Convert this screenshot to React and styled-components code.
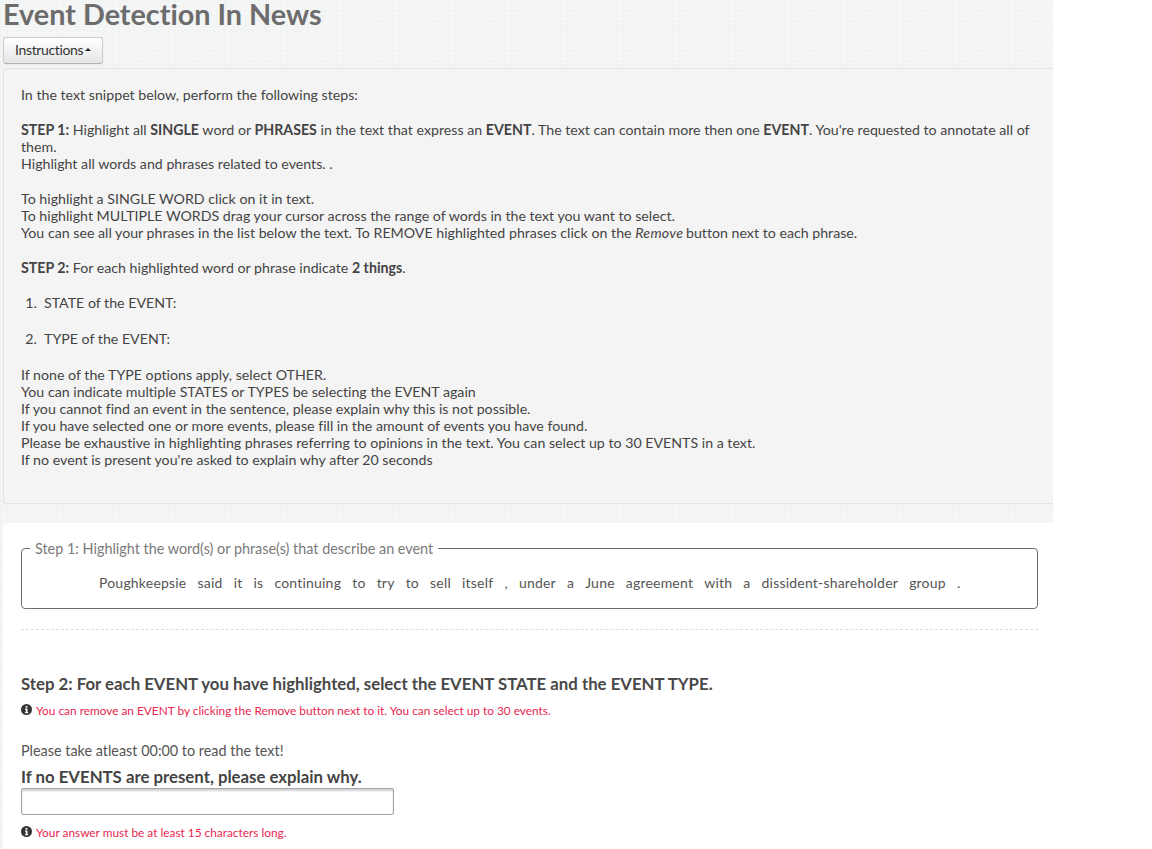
import React from "react";
import styled, { createGlobalStyle } from "styled-components";

const GlobalStyle = createGlobalStyle`
	html, body {
		margin: 0;
		height: 849px;
		overflow: hidden;
		background: #fff;
	}
	body {
		font-family: Lato, "Liberation Sans", sans-serif;
		font-size: 14.2px;
		line-height: 17px;
		font-variant-ligatures: none;
		color: #444;
	}
`;

const Page = styled.div`
	width: 1053px;
	height: 849px;
	overflow: hidden;
	padding-left: 3px;
	box-sizing: border-box;
	background-color: #f3f4f4;
	background-image:
		repeating-linear-gradient(0deg, rgba(255, 255, 255, 0.25) 0 1px, transparent 1px 5px),
		repeating-linear-gradient(90deg, rgba(232, 232, 232, 0.18) 0 1px, transparent 1px 7px);
`;

const Title = styled.h1`
	margin: 0;
	font-size: 28.8px;
	line-height: 28px;
	font-weight: 700;
	color: #6c6c6c;
`;

const ToggleButton = styled.button`
	display: flex;
	align-items: center;
	gap: 2px;
	width: 100px;
	height: 27px;
	margin-top: 9px;
	padding: 0 0 2px 11px;
	font: inherit;
	font-size: 14px;
	letter-spacing: -0.35px;
	color: #333;
	background: linear-gradient(#fff, #e6e6e6);
	border: 1px solid #ccc;
	border-bottom-color: #b3b3b3;
	border-radius: 3px;
	box-shadow: 0 1px 2px rgba(0, 0, 0, 0.05);
`;

const Caret = styled.span`
	width: 0;
	height: 0;
	border-left: 3px solid transparent;
	border-right: 3px solid transparent;
	border-bottom: 3px solid #222;
`;

const Well = styled.div`
	height: 436px;
	margin-top: 4px;
	padding: 17px 17px 0;
	box-sizing: border-box;
	background: #f4f4f4;
	border: 1px solid #e3e3e3;
	border-right: 0;
	border-radius: 4px 0 0 4px;
`;

const Para = styled.p`
	margin: 0 0 18px;
`;

const Steps = styled.ol`
	margin: 0 0 19px;
	padding-left: 23px;
`;

const StepItem = styled.li`
	margin-bottom: 19px;
	&::marker {
		content: counter(list-item) ".\\00a0\\00a0";
	}
	&:last-child {
		margin-bottom: 0;
	}
`;

const RemoveWord = styled.i`
	letter-spacing: 0.3px;
	margin-right: -1px;
`;

const Card = styled.div`
	height: 326px;
	margin-top: 19px;
	padding: 17px 15px 0 18px;
	box-sizing: border-box;
	background: #fff;
	border-radius: 4px 0 0 0;
`;

const SentenceBox = styled.fieldset`
	height: 69px;
	margin: 0;
	padding: 0;
	box-sizing: border-box;
	border: 1px solid #6e6e6e;
	border-radius: 4px;
`;

const BoxLegend = styled.legend`
	padding: 0 5px;
	margin-left: 8px;
	color: #7a7a7a;
	font-size: 14.4px;
	line-height: 17px;
`;

const Sentence = styled.div`
	display: flex;
	gap: 11.1px;
	padding: 17px 0 0 77px;
	color: #555;
	font-size: 14px;
	letter-spacing: 0.2px;
`;

const Divider = styled.hr`
	height: 0;
	margin: 20px 0 0;
	border: 0;
	border-top: 1px dashed #ddd;
`;

const StepHeading = styled.h4`
	margin: 44px 0 0;
	font-size: 16.8px;
	line-height: 20px;
	font-weight: 700;
	color: #484848;
`;

const Hint = styled.div`
	display: flex;
	align-items: center;
	gap: 4px;
	margin-top: ${(p) => p.$top}px;
	font-size: 11.85px;
	line-height: 15px;
	color: #e8264f;
`;

const InfoDot = styled.svg`
	width: 11px;
	height: 11px;
	flex: none;
	margin-top: -3px;
`;

const Notice = styled.div`
	margin-top: 24px;
	font-size: 14.4px;
	color: #555;
`;

const AskHeading = styled.h5`
	margin: 8px 0 0;
	font-size: 16.8px;
	line-height: 19px;
	font-weight: 700;
	color: #444;
`;

const Answer = styled.input`
	display: block;
	width: 373px;
	height: 27px;
	margin-top: 2px;
	padding: 0 6px;
	box-sizing: border-box;
	background: #fff;
	border: 1px solid #a3a3a8;
	border-radius: 2px;
	box-shadow: inset 0 2px 2px rgba(0, 0, 0, 0.18);
`;

const InfoIcon = () => (
	<InfoDot viewBox="0 0 12 12">
		<circle cx="6" cy="6" r="6" fill="#333" />
		<rect x="5" y="2.2" width="2" height="1.8" fill="#fff" />
		<path d="M4.4 5h2.7v3.7h.8V10H4.3V8.700h.9V6.200h-.8z" fill="#fff" />
	</InfoDot>
);

const WORDS = "Poughkeepsie said it is continuing to try to sell itself , under a June agreement with a dissident-shareholder group .".split(" ");

export default function App() {
	return (
		<Page>
			<GlobalStyle />
			<Title>Event Detection In News</Title>
			<ToggleButton type="button">
				Instructions
				<Caret />
			</ToggleButton>
			<Well>
				<Para>In the text snippet below, perform the following steps:</Para>
				<Para>
					<b>STEP 1:</b> Highlight all <b>SINGLE</b> word or <b>PHRASES</b> in the text that express an <b>EVENT</b>. The text can contain more then one <b>EVENT</b>. You're requested to annotate all of them.
					<br />
					Highlight all words and phrases related to events. .
				</Para>
				<Para>
					To highlight a SINGLE WORD click on it in text.
					<br />
					To highlight MULTIPLE WORDS drag your cursor across the range of words in the text you want to select.
					<br />
					You can see all your phrases in the list below the text. To REMOVE highlighted phrases click on the <RemoveWord>Remove</RemoveWord> button next to each phrase.
				</Para>
				<Para>
					<b>STEP 2:</b> For each highlighted word or phrase indicate <b>2 things</b>.
				</Para>
				<Steps>
					<StepItem>STATE of the EVENT:</StepItem>
					<StepItem>TYPE of the EVENT:</StepItem>
				</Steps>
				<Para>
					If none of the TYPE options apply, select OTHER.
					<br />
					You can indicate multiple STATES or TYPES be selecting the EVENT again
					<br />
					If you cannot find an event in the sentence, please explain why this is not possible.
					<br />
					If you have selected one or more events, please fill in the amount of events you have found.
					<br />
					Please be exhaustive in highlighting phrases referring to opinions in the text. You can select up to 30 EVENTS in a text.
					<br />
					If no event is present you're asked to explain why after 20 seconds
				</Para>
			</Well>
			<Card>
				<SentenceBox>
					<BoxLegend>Step 1: Highlight the word(s) or phrase(s) that describe an event</BoxLegend>
					<Sentence>
						{WORDS.map((word, index) => (
							<span key={index}>{word}</span>
						))}
					</Sentence>
				</SentenceBox>
				<Divider />
				<StepHeading>Step 2: For each EVENT you have highlighted, select the EVENT STATE and the EVENT TYPE.</StepHeading>
				<Hint $top={9}>
					<InfoIcon />
					You can remove an EVENT by clicking the Remove button next to it. You can select up to 30 events.
				</Hint>
				<Notice>Please take atleast 00:00 to read the text!</Notice>
				<AskHeading>If no EVENTS are present, please explain why.</AskHeading>
				<Answer type="text" />
				<Hint $top={10}>
					<InfoIcon />
					Your answer must be at least 15 characters long.
				</Hint>
			</Card>
		</Page>
	);
}
